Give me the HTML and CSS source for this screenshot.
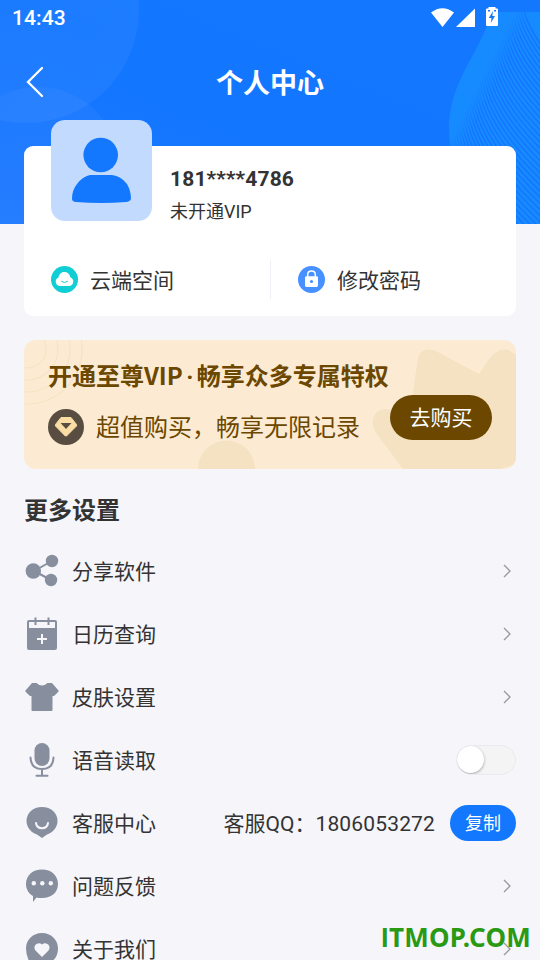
FILE: index.html
```html
<!DOCTYPE html>
<html lang="zh-CN">
<head>
<meta charset="utf-8">
<title>个人中心</title>
<link rel="stylesheet" href="styles.css">
</head>
<body>
<div class="screen">
  <svg class="hero" width="540" height="224" viewBox="0 0 540 224">
    <defs>
      <linearGradient id="sky" x1="0" y1="1" x2="1" y2="0"><stop offset="0" stop-color="#1c77ff"/><stop offset=".5" stop-color="#1276ff"/><stop offset="1" stop-color="#1478ff"/></linearGradient>
      <linearGradient id="orb" x1="0" y1="0" x2="1" y2="1"><stop offset="0" stop-color="#fff" stop-opacity=".03"/><stop offset="1" stop-color="#fff" stop-opacity=".05"/></linearGradient>
      <linearGradient id="fade" gradientUnits="userSpaceOnUse" x1="513" y1="13" x2="527" y2="20"><stop offset="0" stop-color="#1470ff" stop-opacity="0"/><stop offset="1" stop-color="#1470ff" stop-opacity=".85"/></linearGradient>
    </defs>
    <rect width="540" height="224" fill="url(#sky)"/>
    <circle cx="26" cy="10" r="113" fill="url(#orb)"/>
    <circle cx="38" cy="169" r="82" fill="url(#orb)"/>
    <path d="M492 12H540V224H478C462 190 449 160 449 127C449 82 480 53 492 12Z" fill="#168bff"/>
    <g id="waves" fill="none" stroke="url(#fade)" stroke-width="1.4"></g>
    <rect x="480" width="60" height="12" fill="#1478ff"/>
  </svg>

  <header class="status">
    <span>14:43</span>
    <svg width="70" height="22" viewBox="0 0 70 22" fill="#fff">
      <path d="M1 5.6Q12.500 -3 24 5.600L12.500 20Z"/>
      <path d="M26 20L45 1.500V20Z"/>
      <path d="M58.500 0h7v1.500h1.500q1 0 1 1V18q0 1-1 1H57q-1 0-1-1V2.500q0-1 1-1h1.500Z"/>
      <path d="M63 4L58.800 11H61.500L60.800 16L65 9H62.300ZM58 3h2v1.500h-2ZM64 3h2v1.500h-2Z" fill="#1478ff"/>
    </svg>
  </header>

  <nav class="titlebar">
    <svg class="back" width="18" height="32" viewBox="0 0 18 32"><path d="M16 2L2 16L16 30" fill="none" stroke="#fff" stroke-width="2.300" stroke-linecap="round"/></svg>
    <h1>个人中心</h1>
  </nav>

  <section class="profile">
    <div class="user">
      <div class="avatar">
        <svg width="101" height="101" viewBox="0 0 101 101" fill="#1478ff"><circle cx="49.700" cy="35" r="17.300"/><path d="M39 55H61Q70 56 76 64Q80 71 80 79Q79 81.500 75 82Q50 83.800 25 82Q21 81.500 21 79Q21 70 26 64Q31 57 39 55Z"/></svg>
      </div>
      <div class="who">
        <strong>181****4786</strong>
        <span>未开通VIP</span>
      </div>
    </div>
    <div class="quick">
      <a class="quick-item">
        <svg width="27" height="27" viewBox="0 0 27 27"><circle cx="13.500" cy="13.500" r="13.500" fill="#11ced5"/><path d="M9.500 20C6.500 20 4.700 18 4.700 15.500C4.700 13.500 6 12 7.500 11.500C8 8 10.500 6 13.500 6S18.800 8 19.500 11.500C21 12 22.300 13.500 22.300 15.500C22.300 18 20.500 20 17.500 20Z" fill="#fff"/><path d="M10.500 15.500Q13.500 17.800 16.500 15.500" fill="none" stroke="#11ced5" stroke-linecap="round"/></svg>
        <span>云端空间</span>
      </a>
      <a class="quick-item second">
        <svg width="27" height="27" viewBox="0 0 27 27"><circle cx="13.500" cy="13.500" r="13.500" fill="#4690ff"/><path d="M9.700 11V8.500Q9.700 4.900 13.500 4.900T17.300 8.500V11" fill="none" stroke="#fff" stroke-width="1.500"/><rect x="7" y="10.300" width="13" height="10.700" rx="1.400" fill="#fff"/><circle cx="13.500" cy="15.500" r="1.600" fill="#4690ff"/></svg>
        <span>修改密码</span>
      </a>
    </div>
  </section>

  <section class="vip">
    <svg class="vip-art" width="492" height="129" viewBox="0 0 492 129">
      <g fill="none" stroke="#f6e3c3" stroke-width="1.200"><circle cx="3" cy="9" r="19"/><circle cx="3" cy="9" r="31"/><circle cx="3" cy="9" r="43"/><circle cx="3" cy="9" r="55"/></g>
      <g fill="#f5e2c2"><circle cx="202.500" cy="129" r="28.500"/><path d="M379 129L352 93Q345 80 353 72Q359 67 367 70L386 73L393 24Q394 7 409 10L412 11L455 34L465 19Q474 7 485 10L492 15V124L476 129Z"/></g>
    </svg>
    <div class="vip-copy">
      <h2>开通至尊VIP<span class="dot">·</span>畅享众多专属特权</h2>
      <p>
        <svg width="36" height="36" viewBox="0 0 36 36"><circle cx="18" cy="18" r="18" fill="#594d41"/><path d="M13 8.500H23L28.500 15.500V17L18.500 27H17.300L7.500 17V15.500Z" fill="#f9dda5" stroke="#f9dda5" stroke-linejoin="round"/><path d="M12.500 14H23.500L18 20Z" fill="#594d41"/></svg>
        <span>超值购买，畅享无限记录</span>
      </p>
    </div>
    <button class="buy">去购买</button>
  </section>

  <h3>更多设置</h3>
  <ul class="settings">
    <li>
      <svg class="icon" viewBox="0 0 36 36"><path d="M10 18L28 8M10 18L27 27" stroke="#878f9f" stroke-width="2"/><circle cx="9.300" cy="18" r="7.700"/><circle cx="28" cy="8" r="6.200"/><circle cx="27" cy="27" r="6.200"/></svg>
      <span>分享软件</span><svg class="chevron" viewBox="0 0 8 14"><path d="M1 1L7 7L1 13"/></svg>
    </li>
    <li>
      <svg class="icon" viewBox="0 0 36 36"><path fill-rule="evenodd" d="M5 4H31Q33 4 33 6V32Q33 34 31 34H5Q3 34 3 32V6Q3 4 5 4ZM5 6V12H31V6Z"/><path d="M11.500 1.500V9M24.500 1.500V9" stroke="#878f9f" stroke-width="2"/><path d="M18 18V28M13 23H23" stroke="#f5f5fa" stroke-width="2"/></svg>
      <span>日历查询</span><svg class="chevron" viewBox="0 0 8 14"><path d="M1 1L7 7L1 13"/></svg>
    </li>
    <li>
      <svg class="icon" viewBox="0 0 36 36"><path d="M8 4H12.500Q18 9 23.500 4H28L34.500 11.500Q35 12 34.400 12.700L30 17H28.500V31Q28.500 32 27.500 32H8.500Q7.500 32 7.500 31V17H6L1.600 12.700Q1 12 1.500 11.500Z"/></svg>
      <span>皮肤设置</span><svg class="chevron" viewBox="0 0 8 14"><path d="M1 1L7 7L1 13"/></svg>
    </li>
    <li>
      <svg class="icon" viewBox="0 0 36 36"><rect x="10.500" y="1" width="15" height="23" rx="7.500"/><path d="M6.500 15.500Q7 27 18 27T29.500 15.500M18 27V33M12.500 33.700H23.500" fill="none" stroke="#878f9f" stroke-width="2" stroke-linecap="round"/></svg>
      <span>语音读取</span><i class="toggle"></i>
    </li>
    <li>
      <svg class="icon" viewBox="0 0 36 36"><path d="M18 2C27 2 33.500 8 33.500 16C33.500 23 28 28 23 29.500L18 33L13 29.500C8 28 2.500 23 2.500 16C2.500 8 9 2 18 2Z"/><path d="M12 18C13 25 23 25 24 18" fill="none" stroke="#f5f5fa" stroke-width="2" stroke-linecap="round"/></svg>
      <span>客服中心</span><span class="qq">客服QQ：<b>1806053272</b></span><button class="copy">复制</button>
    </li>
    <li>
      <svg class="icon" viewBox="0 0 36 36"><path d="M18 1.500C27.500 1.500 34 7.500 34 16S27.500 30 18 30C15.500 30 14 29.600 12.500 29.400L9 34V28C4.500 25.500 2 21 2 16C2 7.500 8.500 1.500 18 1.500Z"/><g fill="#f5f5fa"><circle cx="9.800" cy="15.300" r="2.200"/><circle cx="18.300" cy="15.300" r="2.200"/><circle cx="26.800" cy="15.300" r="2.200"/></g></svg>
      <span>问题反馈</span><svg class="chevron" viewBox="0 0 8 14"><path d="M1 1L7 7L1 13"/></svg>
    </li>
    <li>
      <svg class="icon" viewBox="0 0 36 36"><path d="M18 2C27 2 34 8.500 34 17.500C34 27 28 33 18 33H6Q4 33 4.500 29Q2 23 2 17.500C2 8.500 9 2 18 2Z"/><path d="M18 26L11.500 19.500C8 15 14 10 18 13.500C22 10 28 15 24.500 19.500Z" fill="#f5f5fa"/></svg>
      <span>关于我们</span><svg class="chevron" viewBox="0 0 8 14"><path d="M1 1L7 7L1 13"/></svg>
    </li>
  </ul>
  <div class="watermark"><span>I</span>TMOP.COM</div>
</div>
<script src="waves.js"></script>
</body>
</html>
```
FILE: styles.css
```css
* { box-sizing: border-box; margin: 0; padding: 0; }
body { background: #f5f5fa; color: #333; font-family: Roboto, "Noto Sans CJK SC", sans-serif; }
.screen { position: relative; height: 960px; overflow: hidden; }
svg { display: block; flex: none; }
button { border: 0; color: #fff; font-family: inherit; }
.hero { position: absolute; top: 0; left: 0; }
.status { position: relative; height: 36px; padding: 0 42px 0 12px; display: flex; align-items: center; justify-content: space-between; color: #fff; font-size: 21px; font-weight: 500; letter-spacing: .1px; }
.status svg { margin-right: -2px; margin-top: -1px; }
.titlebar { position: relative; height: 92px; display: grid; grid-template-columns: 54px 1fr 54px; align-items: center; }
.back { margin-left: 26px; }
.titlebar h1 { color: #fff; text-align: center; font-size: 27px; line-height: 40px; font-weight: 700; padding-top: 4px; }
.profile { position: relative; height: 170px; margin: 18px 24px 0; border-radius: 9px; background: #fff; }
.user { display: flex; padding-left: 27px; height: 97px; }
.avatar { width: 101px; height: 101px; margin-top: -26px; border-radius: 14px; background: #c3daff; }
.who { margin-left: 18px; padding-top: 18px; display: flex; flex-direction: column; }
.who strong { font-size: 21px; line-height: 30px; font-weight: 700; letter-spacing: .14px; }
.who span { font-size: 18px; line-height: 28px; margin-top: 4px; }
.quick { display: grid; grid-template-columns: 1fr 1fr; padding-top: 17px; }
.quick-item { display: flex; align-items: center; gap: 12px; height: 39px; padding-left: 27px; font-size: 21px; }
.quick-item svg { margin-top: -1px; }
.quick-item span { margin-top: -1px; }
.quick-item.second { border-left: 1px solid #f0f0f8; }
.vip { position: relative; height: 129px; margin-top: 24px; margin-left: 24px; margin-right: 24px; border-radius: 12px; overflow: hidden; background: #fcebd2; display: flex; color: #6b4700; }
.vip-art { position: absolute; top: 0; left: 0; }
.vip-copy { position: relative; width: 366px; padding: 17px 0 0 24px; white-space: nowrap; }
.vip h2 { font-family: "Noto Sans CJK SC", sans-serif; font-size: 24px; line-height: 36px; font-weight: 700; }
.dot { display: inline-block; width: 14px; text-align: center; font-family: Roboto, sans-serif; }
.vip p { display: flex; align-items: center; gap: 12px; margin-top: 13px; font-size: 24px; line-height: 36px; }
.vip p span { padding-top: 2px; }
.vip p svg { margin-top: -1px; }
.buy { position: relative; width: 102px; height: 45px; margin-top: 55px; padding-bottom: 3px; border-radius: 23px; background: #6b4700; font-size: 21px; }
h3 { margin: 24px 24px 0; font-size: 24px; line-height: 36px; font-weight: 700; }
.settings { list-style: none; padding: 11px 24px 0; }
.settings li { display: flex; align-items: center; height: 63px; font-size: 21px; line-height: 32px; }
.icon { width: 36px; height: 36px; margin-top: -2px; margin-right: 12px; fill: #878f9f; }
.chevron { width: 8px; height: 14px; margin: 0 5px 2px auto; fill: none; stroke: #999; stroke-width: 1.3; }
.toggle { width: 60px; height: 30px; margin: 0 0 2px auto; border-radius: 15px; border: 1px solid #ebebed; background: #f4f4f4; overflow: hidden; }
.toggle::before { content: ""; display: block; width: 27px; height: 27px; margin: .5px 0; border-radius: 50%; background: #fff; box-shadow: 0 1px 3px rgba(0,0,0,.35); }
.qq { margin-left: auto; margin-right: 15px; }
.qq b { font-weight: 400; letter-spacing: .15px; }
.copy { width: 66px; height: 36px; margin-bottom: 2px; padding-bottom: 2px; border-radius: 18px; background: #1478ff; font-size: 18px; }
.watermark { position: absolute; right: 9px; top: 918px; color: #2a9914; font-family: "Noto Sans", sans-serif; font-size: 26px; font-weight: 700; line-height: 38px; letter-spacing: .25px; }
.watermark span { font-family: Roboto, sans-serif; }
```
FILE: waves.js
```js
// Fan of fine contour lines across the right side of the header.
const group = document.getElementById("waves");
const count = 38;
for (let i = 0; i < count; i++) {
  const t = i / (count - 1);
  const x = 521 - 70 * t;
  const y = -2 + 130 * t;
  const path = document.createElementNS("http://www.w3.org/2000/svg", "path");
  path.setAttribute("d", `M${x} ${y}Q${x + 3} ${y + 25 + 40 * t} 545 ${50 + 225 * t}`);
  group.appendChild(path);
}
```
